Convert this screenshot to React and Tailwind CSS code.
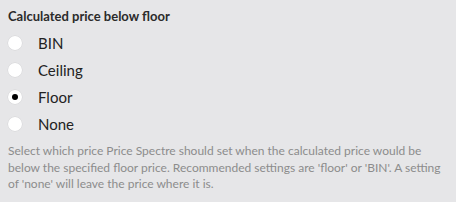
import React from "react";

const options = ["BIN", "Ceiling", "Floor", "None"];

export default function App() {
  return (
    <div className="w-[456px] h-[202px] bg-[#e6e6e8] px-2 pt-[8px] font-['Lato',sans-serif] overflow-hidden">
      <div className="text-[13px] font-bold text-[#2b2b2b] leading-[16px]">Calculated price below floor</div>
      <div className="mt-[5px] flex flex-col">
        {options.map((o) => (
          <label key={o} className="flex items-center h-[27px]">
            <span className="w-[14px] h-[14px] rounded-full bg-white flex items-center justify-center shadow-[0_0_0_0.5px_#d4d4d6]">
              {o === "Floor" && <span className="w-[6px] h-[6px] rounded-full bg-black" />}
            </span>
            <span className="ml-[16px] text-[15px] text-[#222] leading-[18px]">{o}</span>
          </label>
        ))}
      </div>
      <p className="mt-[6px] text-[12px] leading-[16.5px] text-[#8c8c8c]">
        Select which price Price Spectre should set when the calculated price would be below the specified floor price. Recommended settings are 'floor' or 'BIN'. A setting of 'none' will leave the price where it is.
      </p>
    </div>
  );
}
